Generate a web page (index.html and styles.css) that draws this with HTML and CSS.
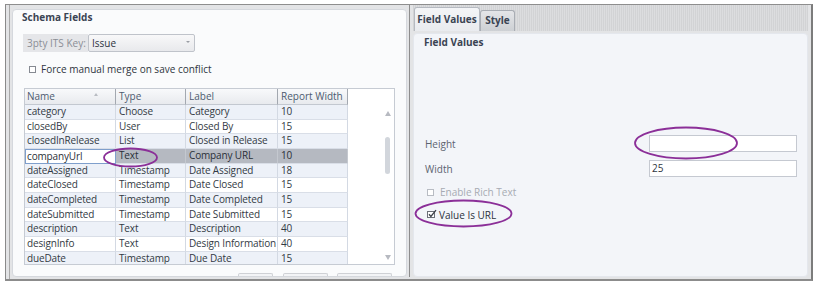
FILE: index.html
```html
<!DOCTYPE html>
<html>
<head>
<meta charset="utf-8">
<link rel="stylesheet" href="styles.css">
</head>
<body>
<div class="frame">
  <section class="left">
    <h2 class="title">Schema Fields</h2>
    <div class="keyrow">
      <span class="keylabel">3pty ITS Key:</span>
      <div class="select"><span>Issue</span><span class="caret"></span></div>
    </div>
    <div class="check"><span class="box"></span><span>Force manual merge on save conflict</span></div>
    <div class="grid">
      <div class="rows">
        <div class="row head">
          <div class="cell">Name<span class="sort"></span></div>
          <div class="cell">Type</div>
          <div class="cell">Label</div>
          <div class="cell">Report Width</div>
        </div>
        <div class="row odd"><div class="cell">category</div><div class="cell">Choose</div><div class="cell">Category</div><div class="cell">10</div></div>
        <div class="row"><div class="cell">closedBy</div><div class="cell">User</div><div class="cell">Closed By</div><div class="cell">15</div></div>
        <div class="row odd"><div class="cell">closedInRelease</div><div class="cell">List</div><div class="cell">Closed in Release</div><div class="cell">15</div></div>
        <div class="row sel"><div class="cell edit">companyUrl</div><div class="cell">Text</div><div class="cell">Company URL</div><div class="cell">10</div></div>
        <div class="row odd"><div class="cell">dateAssigned</div><div class="cell">Timestamp</div><div class="cell">Date Assigned</div><div class="cell">18</div></div>
        <div class="row"><div class="cell">dateClosed</div><div class="cell">Timestamp</div><div class="cell">Date Closed</div><div class="cell">15</div></div>
        <div class="row odd"><div class="cell">dateCompleted</div><div class="cell">Timestamp</div><div class="cell">Date Completed</div><div class="cell">15</div></div>
        <div class="row"><div class="cell">dateSubmitted</div><div class="cell">Timestamp</div><div class="cell">Date Submitted</div><div class="cell">15</div></div>
        <div class="row odd"><div class="cell">description</div><div class="cell">Text</div><div class="cell">Description</div><div class="cell">40</div></div>
        <div class="row"><div class="cell">designInfo</div><div class="cell">Text</div><div class="cell">Design Information</div><div class="cell">40</div></div>
        <div class="row odd"><div class="cell">dueDate</div><div class="cell">Timestamp</div><div class="cell">Due Date</div><div class="cell">15</div></div>
      </div>
      <div class="vscroll">
        <span class="arrow up"></span>
        <span class="thumb"></span>
        <span class="fill"></span>
        <span class="arrow down"></span>
      </div>
    </div>
    <div class="btns"><span class="b1"></span><span class="b2"></span><span class="b3"></span></div>
  </section>
  <div class="splitter"></div>
  <section class="right">
    <div class="tabs">
      <div class="tab active">Field Values</div>
      <div class="tab">Style</div>
    </div>
    <div class="pane">
      <h3 class="title">Field Values</h3>
      <div class="form">
        <div class="frow"><span class="flabel">Height</span><span class="input"></span></div>
        <div class="frow"><span class="flabel">Width</span><span class="input">25</span></div>
        <div class="check disabled"><span class="box"></span><span>Enable Rich Text</span></div>
        <div class="check checked">
          <svg class="cbox" width="11" height="10" viewBox="0 0 11 10"><rect x="0.5" y="2.5" width="7" height="6" fill="#fff" stroke="#6c7078"/><path d="M2 5.3 L3.9 7.4 L9 1.2" fill="none" stroke="#3c4048" stroke-width="1.3"/></svg>
          <span>Value Is URL</span>
        </div>
      </div>
    </div>
  </section>
</div>
<svg class="rings" width="818" height="287" viewBox="0 0 818 287">
  <ellipse cx="130.5" cy="157.5" rx="26.5" ry="9" />
  <ellipse cx="686" cy="143" rx="51" ry="15.5" />
  <ellipse cx="463.5" cy="213.5" rx="48" ry="13" />
</svg>
</body>
</html>
```
FILE: styles.css
```css
html, body {
  margin: 0;
  padding: 0;
  background: #ffffff;
}
body {
  position: relative;
  width: 818px;
  height: 287px;
  overflow: hidden;
  font-family: "Open Sans", "Noto Sans", sans-serif;
  font-size: 10px;
  color: #333a44;
}
.frame {
  box-sizing: border-box;
  margin: 4px 0 0 5px;
  width: 808px;
  height: 277px;
  border-top: 1px solid #8e8e8e;
  border-left: 1px solid #8a8a8a;
  border-right: 2px solid #7c7c7c;
  border-bottom: 2px solid #8c8c8c;
  background: linear-gradient(to right, transparent 3px, #a9a9a9 3px, #a9a9a9 4px, transparent 4px), #e3e4e6;
  display: flex;
  padding: 0 3px 2px 6px;
}
.left {
  box-sizing: border-box;
  width: 395px;
  margin-top: 4px;
  height: 268px;
  border: 1px solid #d5d8dd;
  border-radius: 4px;
  background: #fafbfc;
  overflow: hidden;
}
.title {
  margin: 0;
  padding-left: 9px;
  font-size: 10px;
  font-weight: 700;
  line-height: 14px;
  color: #3a4453;
}
.keyrow {
  display: flex;
  margin: 10px 0 0 10px;
  height: 18px;
}
.keylabel {
  width: 61px;
  padding-left: 4px;
  background: #e5e6e9;
  color: #8b8e96;
  line-height: 18px;
}
.select {
  box-sizing: border-box;
  width: 107px;
  height: 18px;
  border: 1px solid #bfc3ca;
  border-radius: 2px;
  background: linear-gradient(#f8f8f9, #e8e9ec);
  display: flex;
  align-items: center;
  justify-content: space-between;
  padding: 0 4px 0 3px;
  color: #2c323e;
  line-height: 16px;
}
.caret {
  width: 0;
  height: 0;
  border-left: 2px solid transparent;
  border-right: 2px solid transparent;
  border-top: 2px solid #9a9da4;
  margin-top: -3px;
}
.check {
  display: flex;
  align-items: center;
  height: 14px;
  margin: 10px 0 0 16px;
  color: #2f3540;
  line-height: 14px;
}
.check .box {
  box-sizing: border-box;
  width: 7px;
  height: 7px;
  border: 1px solid #868a92;
  background: #ffffff;
  margin-right: 5px;
}
.grid {
  box-sizing: border-box;
  display: flex;
  margin: 12px 0 0 11px;
  width: 371px;
  height: 177px;
  border: 1px solid #c6cbd3;
  background: #ffffff;
  overflow: hidden;
}
.rows {
  width: 323px;
  flex: none;
}
.row {
  display: grid;
  grid-template-columns: 91px 70px 92px 70px;
  height: 14.67px;
}
.row .cell {
  box-sizing: border-box;
  border-right: 1px solid #d3d9e3;
  border-bottom: 1px solid #d9dee7;
  padding-left: 2px;
  line-height: 13.5px;
  letter-spacing: -0.15px;
  white-space: nowrap;
  overflow: hidden;
}
.row .cell:nth-child(n+2) {
  padding-left: 3px;
}
.row.odd {
  background: #edf1f8;
}
.row.head {
  height: 16px;
  background: linear-gradient(#f8f9fb, #e7e9ed);
  color: #4d5b70;
}
.row.head .cell {
  position: relative;
  border-right: 1px solid #a3a8b0;
  border-bottom: 1px solid #c3c8d0;
  line-height: 15px;
  letter-spacing: 0;
}
.sort {
  position: absolute;
  left: 69px;
  top: 4px;
  width: 0;
  height: 0;
  border-left: 2px solid transparent;
  border-right: 2px solid transparent;
  border-bottom: 3px solid #b9bcc2;
}
.row.sel {
  background: #b5b9c1;
  color: #2a3038;
}
.row.sel .cell {
  border-right-color: #c4c8cf;
}
.row.sel .cell.edit {
  background: #ffffff;
  border: 1px solid #7f9fcc;
  padding-left: 1px;
  line-height: 12.5px;
}
.vscroll {
  flex: 1;
  display: flex;
  flex-direction: column;
  align-items: flex-end;
  padding: 22px 3px 4px 0;
}
.arrow {
  width: 0;
  height: 0;
  border-left: 3px solid transparent;
  border-right: 3px solid transparent;
}
.arrow.up {
  border-bottom: 5px solid #b7bac1;
}
.arrow.down {
  border-top: 5px solid #b7bac1;
}
.thumb {
  width: 5px;
  height: 37px;
  margin-top: 21px;
  margin-right: 1px;
  border-radius: 3px;
  background: #d2d6dc;
}
.fill {
  flex: 1;
}
.btns {
  display: flex;
  margin: 8px 0 0 225px;
  height: 6px;
}
.btns span {
  box-sizing: border-box;
  height: 6px;
  border: 1px solid #cfd1d5;
  border-bottom: none;
  background: #f3f4f6;
  border-radius: 2px 2px 0 0;
}
.btns .b1 { width: 35px; }
.btns .b2 { width: 45px; margin-left: 10px; }
.btns .b3 { width: 55px; margin-left: 9px; }
.splitter {
  width: 6px;
  background: linear-gradient(to right, transparent 2px, #8d8d8d 2px, #8d8d8d 3px, transparent 3px);
}
.right {
  width: 395px;
  display: flex;
  flex-direction: column;
}
.tabs {
  display: flex;
  align-items: flex-end;
  height: 26px;
  padding-left: 1px;
  background: repeating-linear-gradient(90deg, #d2d3d5 0 1px, #dcdddf 1px 2px);
}
.tab {
  box-sizing: border-box;
  font-weight: 700;
  color: #3a4453;
  border: 1px solid #a9adb4;
  border-bottom: none;
  border-radius: 3px 3px 0 0;
  text-align: center;
}
.tab.active {
  width: 66px;
  height: 24px;
  line-height: 22px;
  background: linear-gradient(#f4f5f7, #e9ebef);
  border-color: #b6bac1;
}
.tab:not(.active) {
  width: 35px;
  height: 21px;
  line-height: 19px;
  background: linear-gradient(#e4e5e8, #cdd0d4);
}
.pane {
  box-sizing: border-box;
  flex: 1;
  margin-top: 2px;
  border: 1px solid #e4e7ed;
  border-radius: 4px;
  background: #f3f5f9;
}
.pane .title {
  padding-left: 10px;
  margin-top: 1px;
}
.form {
  padding: 86px 10px 0 11px;
}
.frow {
  display: flex;
  justify-content: space-between;
  align-items: center;
  height: 17px;
  margin-bottom: 8px;
}
.flabel {
  color: #5c6370;
}
.input {
  box-sizing: border-box;
  width: 148px;
  height: 17px;
  border: 1px solid #c5c9d1;
  background: #ffffff;
  padding-left: 2px;
  line-height: 15px;
  color: #2f3540;
}
.form .check {
  margin: 0 0 0 2px;
}
.form .check.disabled {
  margin-top: 8px;
  color: #a7abb3;
}
.form .check.disabled .box {
  border-color: #b8bcc3;
  margin-right: 6px;
}
.form .check.checked {
  margin-top: 9px;
  color: #2c323c;
}
.cbox {
  margin-right: 1px;
  margin-top: -2px;
}
.rings {
  position: absolute;
  left: 0;
  top: 0;
  pointer-events: none;
}
.rings ellipse {
  fill: none;
  stroke: #8b2f98;
  stroke-width: 1.8;
}
```
